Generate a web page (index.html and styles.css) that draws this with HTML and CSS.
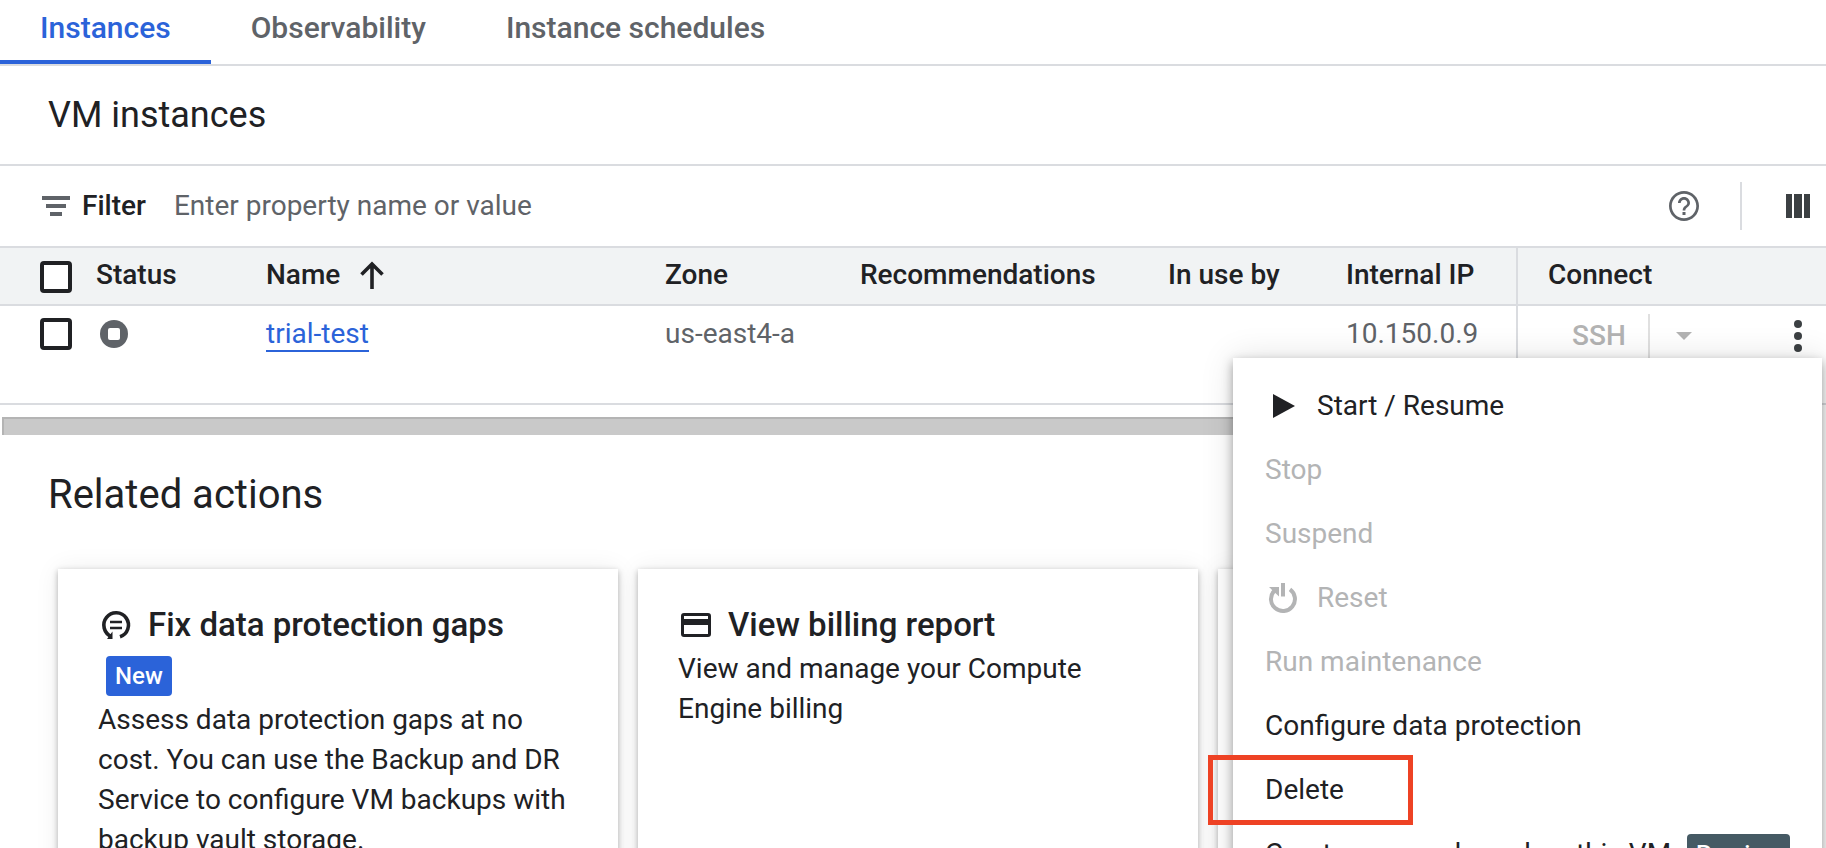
FILE: index.html
```
<!DOCTYPE html>
<html lang="en">
<head>
<meta charset="utf-8">
<title>VM instances</title>
<link rel="stylesheet" href="styles.css">
</head>
<body>
<nav class="tabs">
  <a class="tab tab-active" href="#instances">Instances</a>
  <a class="tab" href="#observability">Observability</a>
  <a class="tab" href="#schedules">Instance schedules</a>
</nav>

<header class="page-title"><h1>VM instances</h1></header>

<section class="toolbar">
  <svg class="filter-icon" width="28" height="20" viewBox="0 0 28 20" fill="currentColor"><path d="M0 0h28v4H0zM4 8h20v4H4zM8 16h12v4H8z"/></svg>
  <label class="filter-label" for="filter">Filter</label>
  <input class="filter-input" id="filter" type="text" placeholder="Enter property name or value">
  <button class="icon-button" type="button" aria-label="Help">
    <svg width="36" height="36" viewBox="0 0 24 24" fill="currentColor"><path d="M11 18h2v-2h-2v2zm1-16C6.480 2 2 6.480 2 12s4.480 10 10 10 10-4.480 10-10S17.520 2 12 2zm0 18.200c-4.500 0-8.200-3.700-8.200-8.200S7.500 3.800 12 3.800s8.200 3.700 8.200 8.200-3.700 8.200-8.200 8.200zM12 6c-2.210 0-4 1.790-4 4h1.800c0-1.200.980-2.200 2.200-2.200s2.200 1 2.200 2.200c0 2-3.100 1.750-3.100 5h1.800c0-2.250 3.100-2.500 3.100-5 0-2.210-1.790-4-4-4z"/></svg>
  </button>
  <span class="divider"></span>
  <button class="icon-button columns-button" type="button" aria-label="Column display options">
    <svg width="24" height="24" viewBox="0 0 24 24" fill="currentColor"><path d="M0 0h6v24H0zM8 0h8v24H8zM18 0h6v24h-6z"/></svg>
  </button>
</section>

<div class="table-wrap">
<table class="vm-table">
  <colgroup><col class="c-check"><col class="c-status"><col class="c-name"><col class="c-zone"><col class="c-rec"><col class="c-use"><col class="c-ip"><col class="c-connect"></colgroup>
  <thead>
    <tr>
      <th><input class="check" type="checkbox" aria-label="Select all"></th>
      <th>Status</th>
      <th><span class="sorted">Name <svg width="24" height="28" viewBox="0 0 24 28" fill="none" stroke="currentColor" stroke-width="3.600"><path d="M12 28V3M1.500 13.500 12 3l10.500 10.500"/></svg></span></th>
      <th>Zone</th>
      <th>Recommendations</th>
      <th>In use by</th>
      <th>Internal IP</th>
      <th class="connect">Connect</th>
    </tr>
  </thead>
  <tbody>
    <tr>
      <td><input class="check" type="checkbox" aria-label="Select trial-test"></td>
      <td><svg class="stopped" width="28" height="28" viewBox="0 0 28 28"><circle cx="14" cy="14" r="14" fill="#5f6368"/><rect x="8" y="8" width="12" height="12" rx="2" fill="#fff"/></svg></td>
      <td><a class="vm-link" href="#trial-test">trial-test</a></td>
      <td>us-east4-a</td>
      <td></td>
      <td></td>
      <td>10.150.0.9</td>
      <td class="connect">
        <div class="connect-tools">
          <button class="ssh" type="button" disabled>SSH</button>
          <button class="ssh-more" type="button" disabled aria-label="SSH options"><svg width="16" height="8" viewBox="0 0 16 8" fill="currentColor"><path d="M0 0h16L8 8z"/></svg></button>
          <button class="row-menu" type="button" aria-label="More actions"><svg width="8" height="32" viewBox="0 0 8 32" fill="currentColor"><circle cx="4" cy="4" r="4"/><circle cx="4" cy="16" r="4"/><circle cx="4" cy="28" r="4"/></svg></button>
        </div>
      </td>
    </tr>
  </tbody>
</table>
</div>
<div class="scrollbar"></div>

<main class="related">
  <h2>Related actions</h2>
  <div class="cards">
    <article class="card">
      <h3><svg width="36" height="36" viewBox="0 0 36 36" fill="none" stroke="#202124" stroke-width="3.600"><path d="M13.500 29.500A12.300 12.300 0 1 1 22 29.800"/><path d="M12 15h12M12 21h12" stroke-width="2.400"/><path d="M14.500 24.500V32H9z" fill="#202124" stroke="none"/></svg>Fix data protection gaps</h3>
      <span class="badge-new">New</span>
      <p>Assess data protection gaps at no cost. You can use the Backup and DR Service to configure VM backups with backup vault storage.</p>
    </article>
    <article class="card">
      <h3><svg width="36" height="36" viewBox="0 0 36 36" fill="#202124"><path fill-rule="evenodd" d="M6 6h24a3 3 0 0 1 3 3v18a3 3 0 0 1-3 3H6a3 3 0 0 1-3-3V9a3 3 0 0 1 3-3zm0 3v3h24V9zm0 9v9h24v-9z"/></svg>View billing report</h3>
      <p>View and manage your Compute Engine billing</p>
    </article>
    <article class="card"></article>
  </div>
</main>

<div class="menu" role="menu">
  <button class="menu-item" type="button" role="menuitem"><svg width="36" height="36" viewBox="0 0 36 36" fill="currentColor"><path d="M8 6v24l22-12z"/></svg>Start / Resume</button>
  <button class="menu-item" type="button" role="menuitem" disabled>Stop</button>
  <button class="menu-item" type="button" role="menuitem" disabled>Suspend</button>
  <button class="menu-item" type="button" role="menuitem" disabled><svg width="36" height="36" viewBox="0 0 36 36" fill="currentColor"><path d="M16 3h4v13.500h-4z"/><path d="M4 7h10v9.500z"/><path d="M9.200 10.800A12 12 0 1 0 25 9.300" fill="none" stroke="currentColor" stroke-width="4"/></svg>Reset</button>
  <button class="menu-item" type="button" role="menuitem" disabled>Run maintenance</button>
  <button class="menu-item" type="button" role="menuitem">Configure data protection</button>
  <button class="menu-item marked" type="button" role="menuitem">Delete</button>
  <button class="menu-item" type="button" role="menuitem">Create a group based on this VM <span class="badge-preview">Preview</span></button>
</div>
</body>
</html>
```

FILE: styles.css
```
*, *::before, *::after { box-sizing: border-box; }
html { height: 100%; }
body {
  position: relative;
  height: 100%;
  margin: 0;
  overflow: hidden;
  background: #fff;
  color: #202124;
  font: 400 28px/40px Roboto, sans-serif;
}
button { padding: 0; border: 0; background: none; color: inherit; font: inherit; }
svg { display: block; flex: none; }

.tabs { display: flex; height: 66px; border-bottom: 2px solid #dadce0; }
.tab {
  padding: 8px 40px 16px;
  color: #5f6368;
  font-size: 30px;
  font-weight: 500;
  text-decoration: none;
}
.tab-active { border-bottom: 4px solid #2b63d9; color: #2b63d9; }

.page-title { padding: 24px 48px; border-bottom: 2px solid #dadce0; }
h1 { margin: 0; font-size: 36px; line-height: 50px; font-weight: 400; }

.toolbar {
  display: flex;
  align-items: center;
  height: 82px;
  padding: 0 16px 0 42px;
  border-bottom: 2px solid #dadce0;
  color: #5f6368;
}
.filter-label { margin: 0 28px 0 12px; color: #202124; font-weight: 500; }
.filter-input { flex: 1; min-width: 0; padding: 0; border: 0; outline: 0; font: inherit; color: #202124; }
.filter-input::placeholder { color: #5f6368; opacity: 1; }
.divider { width: 2px; height: 48px; margin: 0 44px 0 38px; background: #dadce0; }
.columns-button { color: #3c4043; }

.table-wrap { height: 157px; border-bottom: 2px solid #dadce0; }
.vm-table { width: 100%; height: 155px; border-spacing: 0; table-layout: fixed; }
.c-check { width: 96px; }
.c-status { width: 170px; }
.c-name { width: 399px; }
.c-zone { width: 195px; }
.c-rec { width: 308px; }
.c-use { width: 178px; }
.c-ip { width: 170px; }
.vm-table th {
  height: 58px;
  padding: 0 0 2px;
  border-bottom: 2px solid #dadce0;
  background: #f1f3f4;
  font-weight: 500;
  text-align: left;
  white-space: nowrap;
}
.vm-table td { padding: 8px 0 0; color: #5f6368; vertical-align: top; }
.vm-table .connect { border-left: 2px solid #dadce0; }
.vm-table th.connect { padding-left: 30px; }
.sorted { display: flex; align-items: center; gap: 20px; }
.check {
  display: block;
  appearance: none;
  width: 32px;
  height: 32px;
  margin: 4px 0 0 40px;
  border: 4px solid #202124;
  border-radius: 4px;
  background: #fff;
}
.stopped { margin: 6px 0 0 4px; }
.vm-link { border-bottom: 2px solid #2b63d9; color: #2b63d9; text-decoration: none; }
.connect-tools { display: flex; align-items: center; padding-right: 24px; }
.ssh, .ssh-more, .row-menu { height: 44px; }
.ssh { padding: 0 22px 0 54px; border-right: 2px solid #e0e0e0; color: #b3b3b3; font-weight: 500; }
.ssh-more { padding: 0 26px; color: #b3b3b3; }
.row-menu { margin-left: auto; color: #3c4043; }

.scrollbar {
  height: 18px;
  margin: 12px 24px 0 2px;
  border: solid #b4b4b4;
  border-width: 2px 0 0 2px;
  background: #c9c9c9;
}

.related { padding: 34px 0 0 58px; }
h2 { margin: 0 0 48px -10px; font-size: 40px; line-height: 52px; font-weight: 400; }
.cards { display: grid; grid-template-columns: repeat(3, 560px); gap: 20px; }
.card {
  min-height: 400px;
  padding: 36px 40px;
  background: #fff;
  box-shadow: 0 2px 6px rgba(0, 0, 0, .3), 0 0 24px rgba(0, 0, 0, .07);
}
h3 { display: flex; align-items: center; gap: 14px; margin: 0 0 4px; font-size: 33px; font-weight: 500; }
.badge-new {
  display: block;
  width: fit-content;
  margin: 7px 0 4px 8px;
  padding: 0 9px;
  border-radius: 4px;
  background: #2b63d9;
  color: #fff;
  font-size: 24px;
  font-weight: 500;
}
.card p { margin: 0; }
h3 + .badge-new { margin-top: 11px; }

.menu {
  position: absolute;
  top: 358px;
  right: 4px;
  width: 589px;
  padding: 16px 0;
  background: #fff;
  box-shadow: 0 4px 10px rgba(0, 0, 0, .35), 0 0 32px rgba(0, 0, 0, .12);
}
.menu-item {
  position: relative;
  display: flex;
  align-items: center;
  gap: 16px;
  width: 100%;
  height: 64px;
  padding: 0 32px;
  text-align: left;
  white-space: nowrap;
}
.menu-item:disabled { color: #b3b4b5; }
.marked::after {
  content: "";
  position: absolute;
  top: -3px;
  left: -25px;
  width: 205px;
  height: 70px;
  border: 5px solid #ee4224;
}
.badge-preview { padding: 0 9px; border-radius: 4px; background: #455a64; color: #fff; font-size: 24px; font-weight: 500; }
```
